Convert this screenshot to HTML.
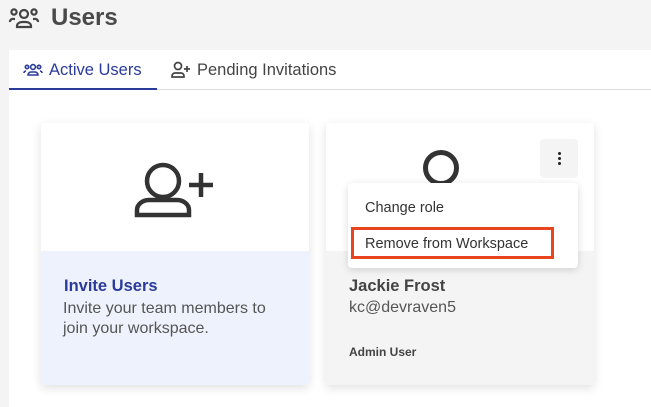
<!DOCTYPE html>
<html><head><style>
*{margin:0;padding:0;box-sizing:border-box}
body{width:651px;height:407px;background:#f4f4f4;font-family:"Liberation Sans",sans-serif;position:relative;overflow:hidden;color:#333}
.abs{position:absolute}
</style></head><body>
<svg class="abs" style="left:8px;top:7px" width="32" height="24" viewBox="0 0 32 24" fill="none" stroke="#444" stroke-width="2.2">
<circle cx="16" cy="7" r="4"/><path d="M9 20v-1a5 4 0 0 1 5-4h4a5 4 0 0 1 5 4v1z"/>
<circle cx="6" cy="5" r="2.6"/><circle cx="26" cy="5" r="2.6"/><path d="M2 15a3 3 0 0 1 4-3h1M30 15a3 3 0 0 0-4-3h-1"/></svg>
<div class="abs" style="left:51px;top:4px;font-size:24px;font-weight:bold;color:#4a4a4a">Users</div>
<div class="abs" style="left:9px;top:50px;width:642px;height:357px;background:#fff"></div>
<div class="abs" style="left:9px;top:89px;width:642px;height:1px;background:#ddd"></div>
<div class="abs" style="left:9px;top:88px;width:148px;height:2px;background:#2a3b9a"></div>
<svg class="abs" style="left:23px;top:63px" width="20" height="14" viewBox="0 0 20 14" fill="none" stroke="#2a3b9a" stroke-width="1.6">
<circle cx="10" cy="4" r="2.4"/><path d="M5 12a3 3 0 0 1 3-3h4a3 3 0 0 1 3 3z"/><circle cx="4" cy="4" r="1.7"/><circle cx="16" cy="4" r="1.7"/><path d="M1 10a2 2 0 0 1 2-2M19 10a2 2 0 0 0-2-2"/></svg>
<div class="abs" style="left:49px;top:61px;font-size:16.5px;color:#2a3b9a">Active Users</div>
<svg class="abs" style="left:170px;top:61px" width="22" height="18" viewBox="0 0 22 18" fill="none" stroke="#444" stroke-width="1.7">
<circle cx="8" cy="5" r="3.5"/><path d="M2 16v-1a3 3 0 0 1 3-3h6a3 3 0 0 1 3 3v1z"/><path d="M17 5v6M14 8h6"/></svg>
<div class="abs" style="left:197px;top:61px;font-size:16.5px;color:#444">Pending Invitations</div>

<div class="abs" style="left:41px;top:123px;width:268px;height:262px;background:#fff;box-shadow:0 3px 10px rgba(0,0,0,.12);border-radius:3px;overflow:hidden">
<div class="abs" style="left:0;top:128px;width:268px;height:134px;background:#eef2fc"></div>
<svg class="abs" style="left:90px;top:36px" width="90" height="62" viewBox="0 0 90 62" fill="none" stroke="#333" stroke-width="4.5">
<circle cx="32" cy="22" r="16"/><path d="M6 56v-5a12 10 0 0 1 12-10h28a12 10 0 0 1 12 10v5z"/><path d="M70 14v24M58 26h24"/></svg>
<div class="abs" style="left:23px;top:154px;font-size:16.5px;font-weight:bold;color:#2a3b9a">Invite Users</div>
<div class="abs" style="left:22px;top:176px;font-size:16px;line-height:20px;color:#555;width:225px">Invite your team members to join your workspace.</div>
</div>

<div class="abs" style="left:326px;top:123px;width:268px;height:262px;background:#fff;box-shadow:0 3px 10px rgba(0,0,0,.12);border-radius:3px;overflow:hidden">
<div class="abs" style="left:0;top:128px;width:268px;height:134px;background:#f4f4f4"></div>
<div class="abs" style="left:97px;top:27px;width:36px;height:36px;border:5px solid #333;border-radius:50%"></div>
<div class="abs" style="left:214px;top:16px;width:38px;height:39px;background:#f4f4f4;border-radius:4px"></div>
<div class="abs" style="left:232px;top:29px;width:3px;height:3px;background:#222;border-radius:50%;box-shadow:0 5px 0 #222,0 10px 0 #222"></div>
<div class="abs" style="left:23px;top:154px;font-size:16.5px;font-weight:bold;color:#444">Jackie Frost</div>
<div class="abs" style="left:23px;top:176px;font-size:16px;color:#555">kc@devraven5</div>
<div class="abs" style="left:23px;top:222px;font-size:12px;font-weight:bold;color:#444">Admin User</div>
</div>

<div class="abs" style="left:348px;top:183px;width:230px;height:85px;background:#fff;border-radius:4px;box-shadow:0 2px 8px rgba(0,0,0,.15)"></div>
<div class="abs" style="left:365px;top:200px;font-size:14.5px;color:#333">Change role</div>
<div class="abs" style="left:351px;top:227px;width:203px;height:32px;border:3px solid #e8451e"></div>
<div class="abs" style="left:365px;top:236px;font-size:14.5px;color:#333">Remove from Workspace</div>
</body></html>
